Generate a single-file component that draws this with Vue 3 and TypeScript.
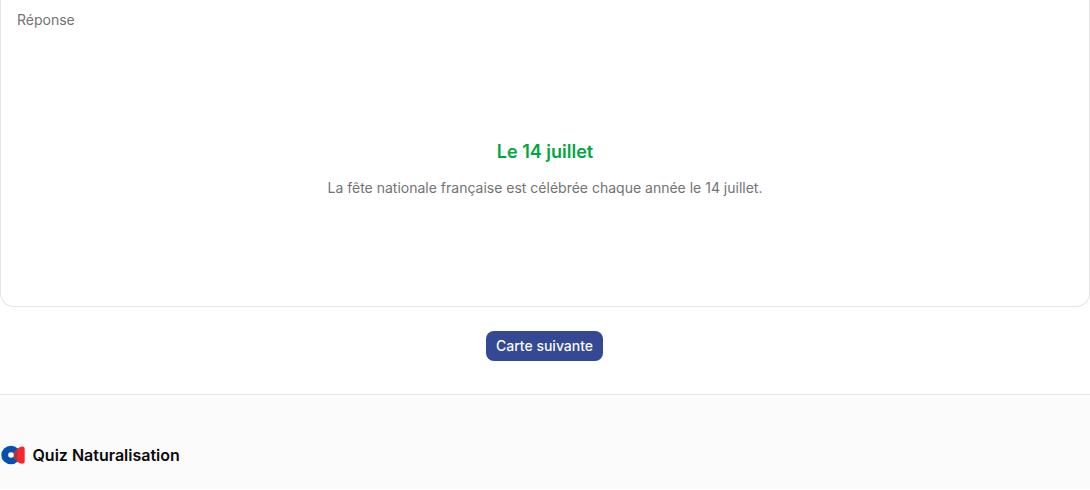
<script setup lang="ts">
interface Flashcard {
  label: string
  answer: string
  explanation: string
}

const card: Flashcard = {
  label: 'Réponse',
  answer: 'Le 14 juillet',
  explanation: 'La fête nationale française est célébrée chaque année le 14 juillet.',
}
</script>

<template>
  <div class="page">
    <main class="quiz">
      <section class="card">
        <span class="label">{{ card.label }}</span>
        <div class="content">
          <h2 class="answer">{{ card.answer }}</h2>
          <p class="explanation">{{ card.explanation }}</p>
        </div>
      </section>
      <button class="next" type="button">Carte suivante</button>
    </main>
    <footer class="footer">
      <svg class="logo" width="26" height="24" viewBox="0 0 26 24" aria-hidden="true">
        <ellipse cx="11" cy="12" rx="9.7" ry="9.3" fill="#064fae" />
        <path d="M13 10.2 L19 4.6 Q24.7 2 24.7 6 V18 Q24.7 22 19 20 L13 14 Z" fill="#f8262b" />
        <path d="M13 9.5 L15.5 7.5 L17.5 7 V17.5 L15.5 16.8 L13 14.5 Z" fill="#a03a43" />
        <circle cx="11" cy="12" r="2.8" fill="#fff" />
      </svg>
      <span class="brand">Quiz Naturalisation</span>
    </footer>
  </div>
</template>

<style>
body {
  margin: 0;
  background: #fff;
}
</style>

<style scoped>
.page {
  display: flex;
  flex-direction: column;
  height: 489px;
  overflow: hidden;
  font-family: Inter, sans-serif;
  color: #0a0a0a;
}

.quiz {
  display: flex;
  flex-direction: column;
  align-items: center;
  flex: 0 0 394px;
}

.card {
  box-sizing: border-box;
  display: flex;
  flex-direction: column;
  width: 100%;
  height: 307px;
  padding: 10px 16px 0;
  border: 1px solid #e5e5e5;
  border-top: 0;
  border-radius: 0 0 14px 14px;
}

.label,
.explanation {
  font-size: 14px;
  line-height: 20px;
  color: #737373;
}

.content {
  display: flex;
  flex-direction: column;
  align-items: center;
  gap: 12px;
  margin-top: 108px;
  text-align: center;
}

.answer {
  margin: 0;
  font-size: 18px;
  font-weight: 600;
  line-height: 28px;
  color: #00a63e;
}

.explanation {
  margin: 0;
}

.next {
  width: 117px;
  height: 30px;
  margin: 24px 1px 0 0;
  padding: 0;
  border: 0;
  border-radius: 8px;
  background: #344893;
  color: #fafafa;
  font: 500 14px/20px Inter, sans-serif;
}

.footer {
  display: flex;
  align-items: flex-start;
  gap: 6.5px;
  flex: 1;
  padding-top: 48px;
  border-top: 1px solid #e5e5e5;
  background: #fbfbfb;
}

.logo {
  flex: none;
}

.brand {
  font-size: 16px;
  font-weight: 600;
  line-height: 24px;
}
</style>
